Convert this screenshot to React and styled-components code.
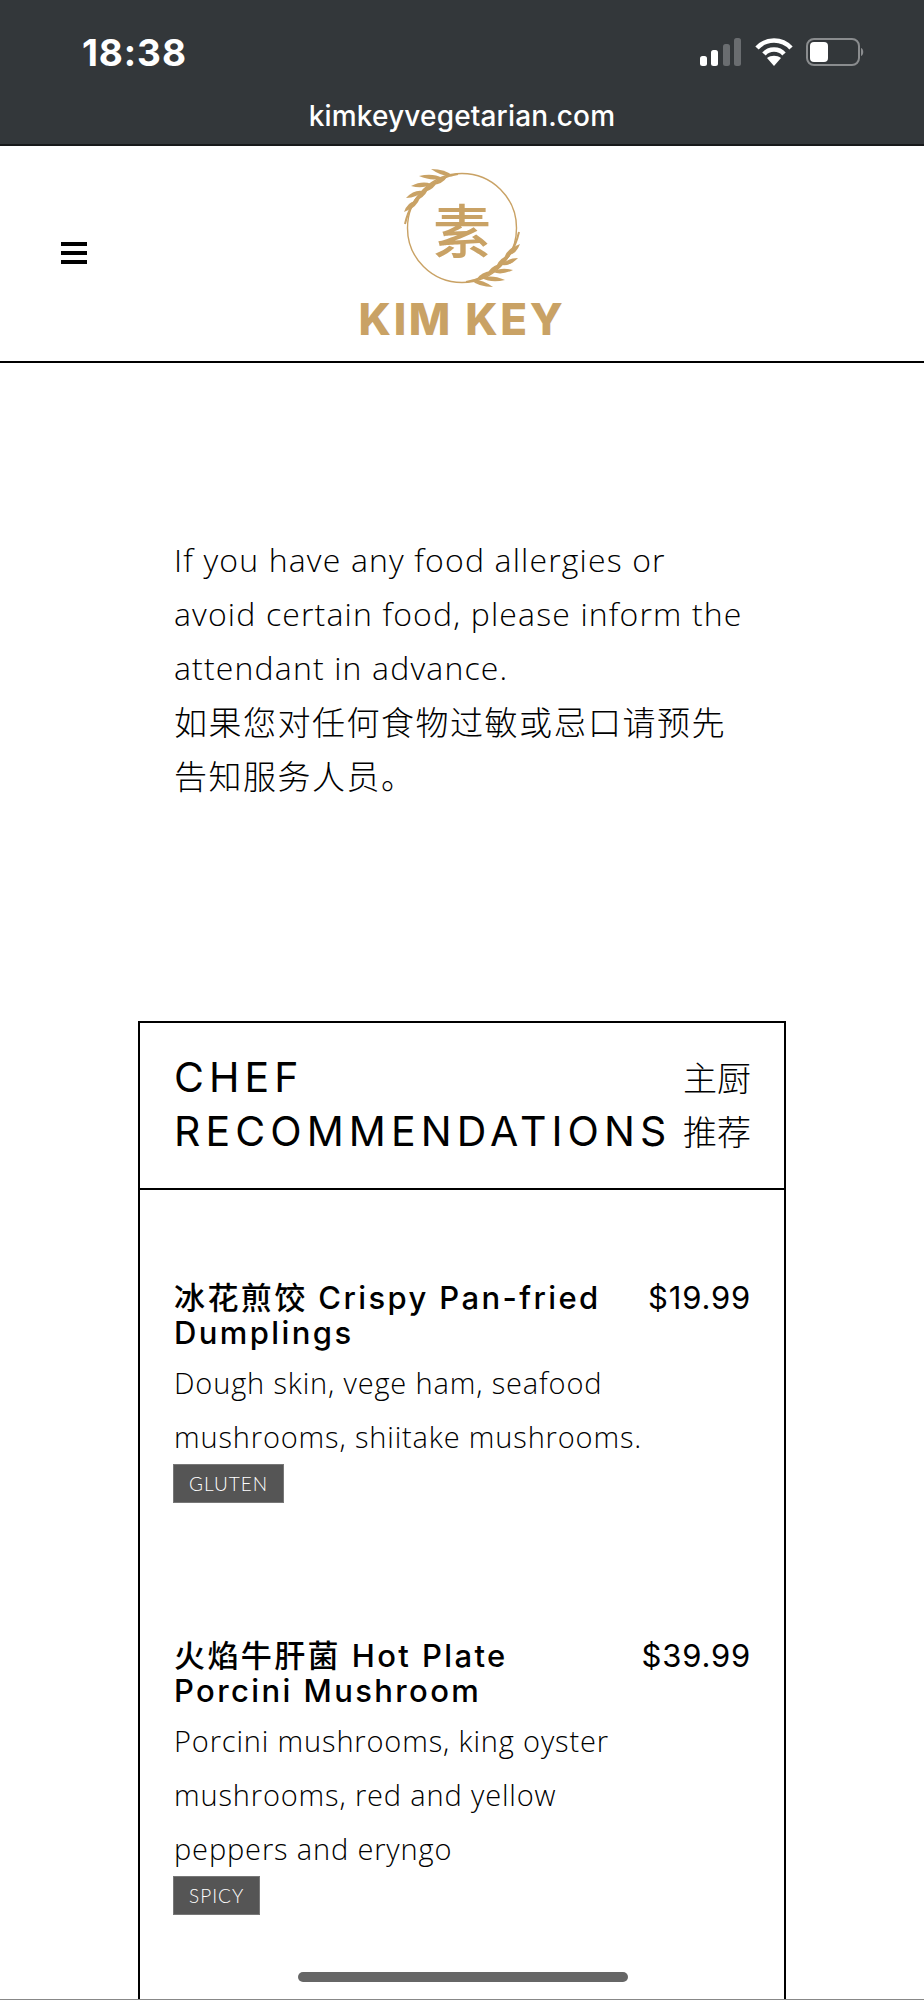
import React from 'react';
import styled, { createGlobalStyle } from 'styled-components';

const GlobalStyle = createGlobalStyle`
  html, body { margin: 0; padding: 0; background: #fff; }
  body { width: 924px; height: 2000px; overflow: hidden; }
`;

const CJK = '"Noto Sans CJK SC"';
const GOLD = '#c9a265';

const Page = styled.div`
  position: relative;
  width: 924px;
  height: 2000px;
  overflow: hidden;
  color: #000;
`;

const StatusBar = styled.div`
  height: 146px;
  box-sizing: border-box;
  background: #33373a;
  border-bottom: 2px solid #17191a;
  color: #fff;
  font-family: Inter, sans-serif;
  padding: 30px 59px 0 82px;
`;

const StatusRow = styled.div`
  display: flex;
  justify-content: space-between;
  align-items: center;
  height: 44px;
`;

const Time = styled.div`
  font-size: 37px;
  font-weight: 700;
  letter-spacing: 0.9px;
`;

const StatusIcons = styled.div`
  display: flex;
  align-items: center;
  gap: 13px;
`;

const Url = styled.div`
  text-align: center;
  font-size: 28px;
  font-weight: 500;
  letter-spacing: 0.15px;
  margin-top: 25px;
  margin-left: -23px;
`;

const Header = styled.header`
  display: flex;
  justify-content: center;
  height: 217px;
  box-sizing: border-box;
  border-bottom: 2px solid #000;
  position: relative;
`;

const Burger = styled.div`
  position: absolute;
  left: 61px;
  top: 96px;
  width: 26px;
  height: 22px;
  display: flex;
  flex-direction: column;
  justify-content: space-between;
  span { display: block; height: 4px; background: #000; }
`;

const Logo = styled.div`
  display: flex;
  flex-direction: column;
  align-items: center;
  padding-top: 19px;
`;

const Emblem = styled.div`
  position: relative;
  width: 124px;
  height: 124px;
  svg { position: absolute; left: 0; top: 0; }
`;

const Glyph = styled.div`
  position: absolute;
  left: 0;
  right: 0;
  top: 28px;
  text-align: center;
  font-family: ${CJK}, sans-serif;
  font-size: 58px;
  font-weight: 500;
  line-height: 70px;
  color: ${GOLD};
`;

const Brand = styled.div`
  font-family: Inter, sans-serif;
  font-size: 44px;
  line-height: 44px;
  font-weight: 800;
  letter-spacing: 2.6px;
  color: ${GOLD};
  margin-top: 8px;
  white-space: nowrap;
`;

const Notice = styled.div`
  margin: 170px 0 0 174px;
  width: 600px;
  font-family: "Open Sans", ${CJK}, sans-serif;
  font-weight: 300;
  font-size: 32px;
  letter-spacing: 1.15px;
  line-height: 54px;
`;

const NoticeCn = styled.div`
  font-family: ${CJK}, sans-serif;
  font-size: 33px;
  letter-spacing: 1.5px;
  height: 54px;
  line-height: 52px;
`;

const Card = styled.section`
  margin: 218px 0 0 138px;
  width: 648px;
  box-sizing: border-box;
  border: 2px solid #000;
  height: 1200px;
`;

const CardHead = styled.div`
  display: flex;
  justify-content: space-between;
  padding: 27px 33px 30px 34px;
  border-bottom: 2px solid #000;
`;

const CardTitle = styled.h2`
  margin: 0;
  font-family: Inter, sans-serif;
  font-weight: 400;
  font-size: 41px;
  letter-spacing: 5.1px;
  line-height: 54px;
  white-space: nowrap;
`;

const CardTitleCn = styled.div`
  font-family: ${CJK}, sans-serif;
  font-weight: 300;
  font-size: 34px;
  line-height: 54px;
  width: 68px;
  text-align: right;
`;

const Items = styled.div`
  padding: 90px 33px 0 34px;
`;

const Item = styled.article`
  margin-bottom: 135px;
`;

const ItemHead = styled.div`
  display: flex;
  justify-content: space-between;
  gap: 30px;
`;

const ItemName = styled.h3`
  margin: 0;
  font-family: Inter, ${CJK}, sans-serif;
  font-weight: 500;
  font-size: 31px;
  letter-spacing: 2.4px;
  line-height: 35px;
`;

const Price = styled.div`
  font-family: Inter, sans-serif;
  font-weight: 400;
  font-size: 31px;
  letter-spacing: 0.8px;
  line-height: 35px;
  white-space: nowrap;
`;

const ItemDesc = styled.p`
  margin: 6px 0 0;
  font-family: "Open Sans", sans-serif;
  font-weight: 300;
  font-size: 29px;
  letter-spacing: 0.85px;
  line-height: 54px;
`;

const Tag = styled.span`
  display: inline-block;
  margin-left: -1px;
  background: #555;
  border: 1px solid #777;
  color: #fff;
  font-family: Lato, sans-serif;
  font-weight: 300;
  font-size: 19px;
  letter-spacing: 1px;
  line-height: 37px;
  padding: 0 15px;
`;

const HomeBar = styled.div`
  position: absolute;
  left: 298px;
  top: 1972px;
  width: 330px;
  height: 10px;
  border-radius: 5px;
  background: #666;
`;

const BottomEdge = styled.div`
  position: absolute;
  left: 0;
  right: 0;
  bottom: 0;
  height: 1px;
  background: #888;
`;

// a grain of the wheat ear: a thin lens from its base on the stem to its tip
const Grain = ({ from, to, width = 4.4 }) => {
  const [x1, y1] = from;
  const [x2, y2] = to;
  const dx = x2 - x1;
  const dy = y2 - y1;
  const len = Math.hypot(dx, dy);
  const nx = (-dy / len) * width;
  const ny = (dx / len) * width;
  const mx = x1 + dx * 0.4;
  const my = y1 + dy * 0.4;
  return (
    <path
      d={`M${x1} ${y1} Q${mx + nx} ${my + ny} ${x2} ${y2} Q${mx - nx} ${my - ny} ${x1} ${y1} Z`}
      fill={GOLD}
    />
  );
};

const GRAINS = [
  [[453, 176], [431, 169]],
  [[442, 178], [419, 176]],
  [[431, 184], [411, 186]],
  [[422, 191], [406, 198]],
  [[415, 201], [404, 212]],
  [[447, 177], [432, 185]],
  [[437, 181], [425, 192]],
  [[428, 187], [418, 200]],
  [[420, 195], [411, 209]],
];

const Ear = ({ transform }) => (
  <g transform={transform}>
    <path d="M458 174 C 438 177 412 192 405 224" fill="none" stroke={GOLD} strokeWidth="2" />
    {GRAINS.map((g, i) => <Grain key={i} from={g[0]} to={g[1]} />)}
  </g>
);

const App = () => (
  <Page>
    <GlobalStyle />
    <StatusBar>
      <StatusRow>
        <Time>18:38</Time>
        <StatusIcons>
          <svg width="42" height="28" viewBox="0 0 42 28">
            <rect x="0" y="18" width="7" height="10" rx="2.5" fill="#fff" />
            <rect x="11" y="12" width="7" height="16" rx="2.5" fill="#fff" />
            <rect x="23" y="6" width="7" height="22" rx="2.5" fill="#6a6d70" />
            <rect x="34" y="0" width="7" height="28" rx="2.5" fill="#6a6d70" />
          </svg>
          <svg width="38" height="28" viewBox="0 0 38 28" fill="none" stroke="#fff" strokeWidth="4.5">
            <path d="M2 10 C 11 0 27 0 36 10" />
            <path d="M9 16 C 14 10 24 10 29 16" />
            <path d="M19 28 L 12 20 C 16 17 22 17 26 20 Z" fill="#fff" stroke="none" />
          </svg>
          <svg width="59" height="28" viewBox="0 0 59 28">
            <rect x="1" y="1" width="52" height="26" rx="7" fill="none" stroke="#8a8c8e" strokeWidth="2" />
            <rect x="4" y="4" width="18" height="20" rx="4" fill="#fff" />
            <path d="M55 10 C 58 11 58 17 55 18 Z" fill="#8a8c8e" />
          </svg>
        </StatusIcons>
      </StatusRow>
      <Url>kimkeyvegetarian.com</Url>
    </StatusBar>
    <Header>
      <Burger><span /><span /><span /></Burger>
      <Logo>
        <Emblem>
          <svg width="124" height="124" viewBox="400 165 124 124">
            <circle cx="462" cy="228" r="54.5" fill="none" stroke={GOLD} strokeWidth="1.4" />
            <Ear />
            <Ear transform="rotate(180 462 228)" />
          </svg>
          <Glyph>素</Glyph>
        </Emblem>
        <Brand>KIM KEY</Brand>
      </Logo>
    </Header>
    <Notice>
      If you have any food allergies or<br />
      avoid certain food, please inform the<br />
      attendant in advance.
      <NoticeCn>如果您对任何食物过敏或忌口请预先</NoticeCn>
      <NoticeCn>告知服务人员。</NoticeCn>
    </Notice>
    <Card>
      <CardHead>
        <CardTitle>CHEF<br />RECOMMENDATIONS</CardTitle>
        <CardTitleCn>主厨推荐</CardTitleCn>
      </CardHead>
      <Items>
        <Item>
          <ItemHead>
            <ItemName>冰花煎饺 Crispy Pan-fried Dumplings</ItemName>
            <Price>$19.99</Price>
          </ItemHead>
          <ItemDesc>Dough skin, vege ham, seafood<br />mushrooms, shiitake mushrooms.</ItemDesc>
          <Tag>GLUTEN</Tag>
        </Item>
        <Item>
          <ItemHead>
            <ItemName>火焰牛肝菌 Hot Plate<br />Porcini Mushroom</ItemName>
            <Price>$39.99</Price>
          </ItemHead>
          <ItemDesc>Porcini mushrooms, king oyster<br />mushrooms, red and yellow<br />peppers and eryngo</ItemDesc>
          <Tag>SPICY</Tag>
        </Item>
      </Items>
    </Card>
    <HomeBar />
    <BottomEdge />
  </Page>
);

export default App;
